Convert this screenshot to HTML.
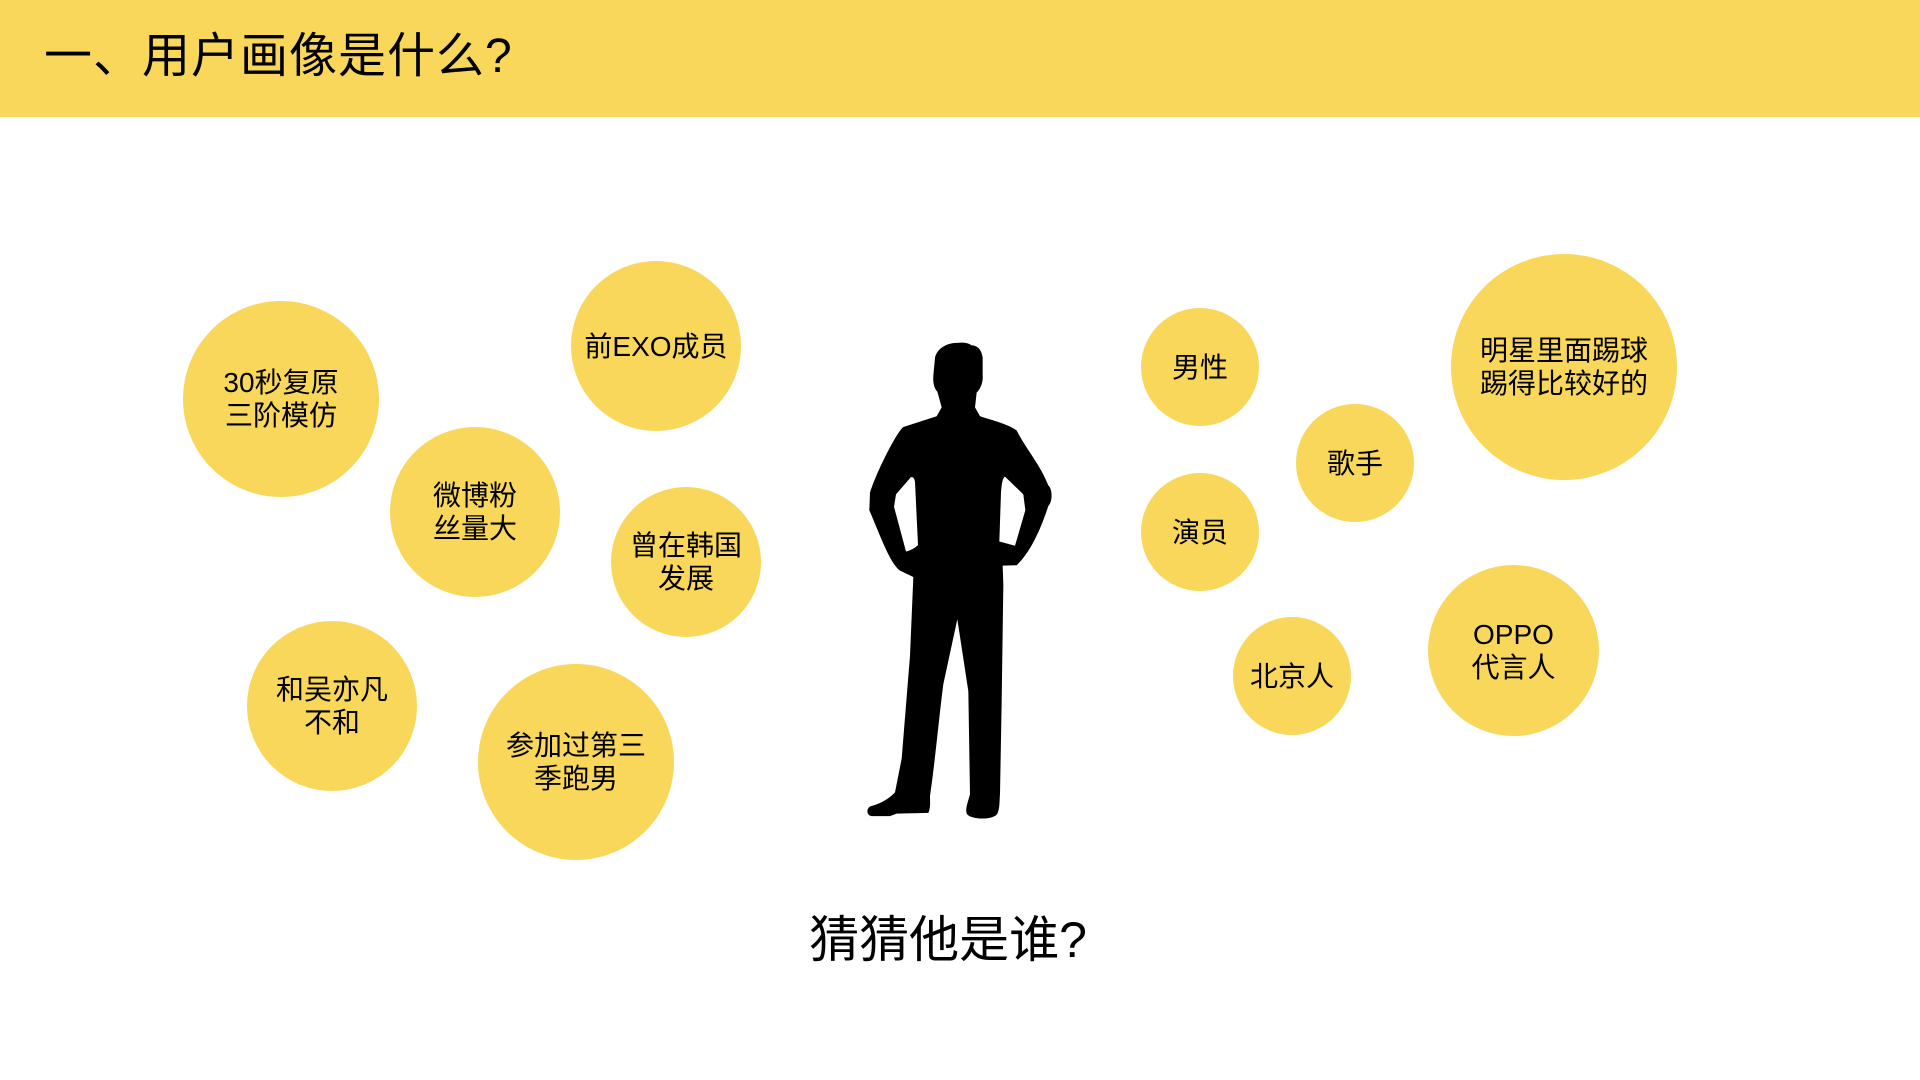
<!DOCTYPE html>
<html><head><meta charset="utf-8"><style>
body{margin:0;width:1920px;height:1080px;background:#fff;position:relative;overflow:hidden;font-family:"Liberation Sans","Noto Sans CJK SC",sans-serif;color:#000}
.hdr{position:absolute;left:0;top:0;width:1920px;height:117px;background:#F8D75A}
.title{position:absolute;left:44px;top:24px;font-size:48px;line-height:66px;letter-spacing:1px}
.c{position:absolute;border-radius:50%;background:#F8D75A;display:flex;align-items:center;justify-content:center;text-align:center;font-size:28px;line-height:33px}
.q{position:absolute;left:800px;top:908px;width:300px;text-align:center;font-size:50px;line-height:64px;margin-left:-2px}
</style></head><body>
<div class="hdr"></div>
<div class="title">一、用户画像是什么?</div>

<div class="c" style="left:183px;top:301px;width:196px;height:196px">30秒复原<br>三阶模仿</div>
<div class="c" style="left:571px;top:261px;width:170px;height:170px">前EXO成员</div>
<div class="c" style="left:390px;top:427px;width:170px;height:170px">微博粉<br>丝量大</div>
<div class="c" style="left:611px;top:487px;width:150px;height:150px">曾在韩国<br>发展</div>
<div class="c" style="left:247px;top:621px;width:170px;height:170px">和吴亦凡<br>不和</div>
<div class="c" style="left:478px;top:664px;width:196px;height:196px">参加过第三<br>季跑男</div>

<div class="c" style="left:1141px;top:308px;width:118px;height:118px">男性</div>
<div class="c" style="left:1451px;top:254px;width:226px;height:226px">明星里面踢球<br>踢得比较好的</div>
<div class="c" style="left:1296px;top:404px;width:118px;height:118px">歌手</div>
<div class="c" style="left:1141px;top:473px;width:118px;height:118px">演员</div>
<div class="c" style="left:1233px;top:617px;width:118px;height:118px">北京人</div>
<div class="c" style="left:1428px;top:565px;width:171px;height:171px">OPPO<br>代言人</div>

<svg style="position:absolute;left:800px;top:301px" width="300" height="596" viewBox="0 0 900 1680" preserveAspectRatio="none">
<path fill-rule="evenodd" fill="#000" d="M470 118 C440 118 410 135 405 160 L400 210 C398 235 405 250 412 255 L425 300 L410 325 L310 355 C290 370 230 480 210 540 L208 590 C240 660 270 740 300 760 L340 778 L330 1000 L305 1290 L285 1385 C260 1410 230 1420 210 1425 C198 1432 200 1450 215 1452 L270 1452 L290 1445 L385 1443 C392 1430 390 1410 390 1395 C405 1300 420 1150 430 1080 L472 897 L505 1100 L510 1390 C505 1410 495 1430 500 1445 C510 1462 580 1465 592 1445 C600 1430 598 1410 600 1390 L605 1130 L610 800 L608 746 L650 745 C700 700 730 620 745 578 C758 565 758 530 745 520 C720 460 680 420 650 365 C620 345 570 335 540 325 L525 300 L530 258 C540 250 550 230 548 210 L548 160 C545 135 530 125 515 125 C505 118 490 116 470 118 Z
M332 497 L288 545 L282 580 L318 706 C330 704 345 696 354 688 L345 510 C343 498 338 495 332 497 Z
M615 495 L670 545 L676 590 L645 690 L598 678 L603 540 C605 515 608 498 615 495 Z"/>
</svg>

<div class="q">猜猜他是谁?</div>
</body></html>
